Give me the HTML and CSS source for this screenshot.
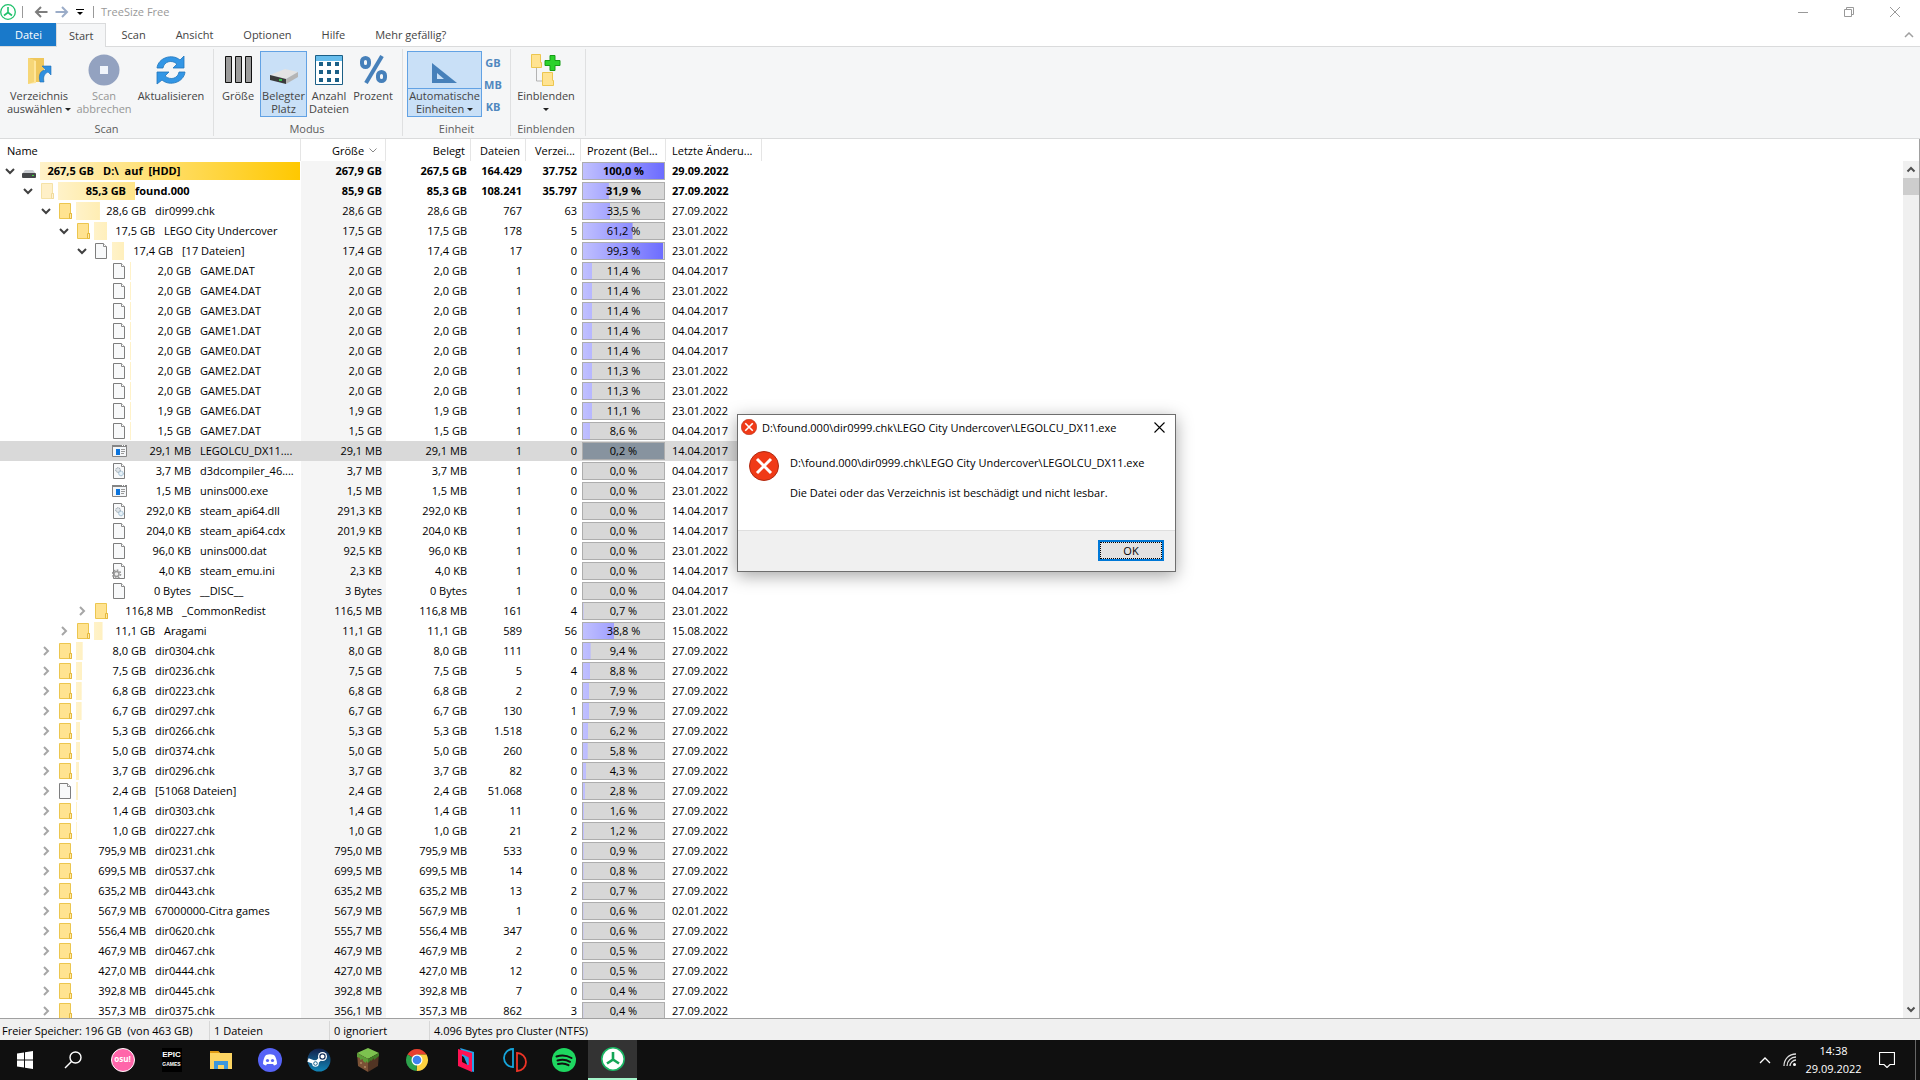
FILE: index.html
```html
<!DOCTYPE html>
<html lang="de">
<head>
<meta charset="UTF-8">
<title>TreeSize Free</title>
<link rel="stylesheet" href="styles.css">
</head>
<body>

<svg class="sprites" aria-hidden="true">
  <symbol id="open" viewBox="0 0 10 10"><path d="M1 3l4 4 4-4" fill="none" stroke="#404040" stroke-width="2"/></symbol>
  <symbol id="closed" viewBox="0 0 10 10"><path d="M3 1l4 4-4 4" fill="none" stroke="#a6a6a6" stroke-width="2"/></symbol>
  <symbol id="folder" viewBox="0 0 16 16">
    <path d="M1.500 .5h11v10h1v5h-12z" fill="#ffe391" stroke="#ecc64f"/>
    <path d="M11.500 15.500v-5h2v5z" fill="#ffe9a6" stroke="#e5b93c"/>
  </symbol>
  <symbol id="file" viewBox="0 0 16 16">
    <path d="M1.500 .5h8l3 3v12h-11z" fill="#f8f9fa" stroke="#7e7e7e"/>
    <path d="M9.500 .5v3h3" fill="#fff" stroke="#8e8e8e"/>
  </symbol>
  <symbol id="exe" viewBox="0 0 16 16">
    <path d="M.5 2.500h14v11H.5z" fill="#f4f6f8" stroke="#858585"/>
    <path d="M0 2h15v2H0z" fill="#858585"/>
    <path d="M10 2h1v1h-1zM12 2h1v1h-1z" fill="#fff"/>
    <path d="M4 6h4v6H4z" fill="#0b74dd"/>
    <path d="M9 6.500h4M9 8.500h4M9 10.500h3" stroke="#999"/>
  </symbol>
  <symbol id="dll" viewBox="0 0 16 16">
    <path d="M1.500 .5h8l3 3v12h-11z" fill="#f8f9fa" stroke="#7e7e7e"/>
    <path d="M9.500 .5v3h3" fill="#fff" stroke="#8e8e8e"/>
    <circle cx="6" cy="7" r="2.300" fill="#dfe5ea" stroke="#8b959e" stroke-dasharray="1.200 .6"/>
    <circle cx="9" cy="10.500" r="2.300" fill="#e6f1f8" stroke="#85aac4" stroke-dasharray="1.200 .6"/>
  </symbol>
  <symbol id="ini" viewBox="0 0 16 16">
    <path d="M1.500 .5h8l3 3v12h-11z" fill="#f8f9fa" stroke="#7e7e7e"/>
    <path d="M9.500 .5v3h3" fill="#fff" stroke="#8e8e8e"/>
    <circle cx="4.500" cy="11" r="4" fill="none" stroke="#999" stroke-width="1.600" stroke-dasharray="1.700 1.400"/>
    <circle cx="4.500" cy="11" r="2.500" fill="#eee" stroke="#999" stroke-width="1.400"/>
  </symbol>
  <symbol id="drive" viewBox="0 0 16 16">
    <path d="M3 7h8l3 4H0z" fill="#c9ccd1"/>
    <rect x="0" y="10" width="14" height="5" rx="1" fill="#45474a"/>
    <path d="M10 12h2v1h-2z" fill="#41d63c"/>
  </symbol>
  <symbol id="error" viewBox="0 0 30 30">
    <circle cx="15" cy="15" r="14.500" fill="#f03a17" stroke="#b02a12"/>
    <path d="M8 8l14 14M22 8L8 22" stroke="#fff" stroke-width="3"/>
  </symbol>
  <symbol id="up" viewBox="0 0 16 16"><path d="M4.500 10L8 6.500l3.500 3.500" fill="none" stroke="#505050" stroke-width="2"/></symbol>
  <symbol id="down" viewBox="0 0 16 16"><path d="M4.500 6L8 9.500 11.500 6" fill="none" stroke="#505050" stroke-width="2"/></symbol>
</svg>

<header class="titlebar">
  <svg class="logo" viewBox="0 0 16 16"><circle cx="8" cy="8" r="7.300" fill="#fff" stroke="#1fc16b" stroke-width="1.300"/><path d="M8 3v5.500l-4 3M8 8.500l4 3" fill="none" stroke="#1fc16b" stroke-width="1.600"/></svg>
  <span class="bar"></span>
  <button class="qa" aria-label="Zurück"><svg width="14" height="12" viewBox="0 0 14 12"><path d="M13.500 6H2M7 1L2 6l5 5" fill="none" stroke="#7d7d7d" stroke-width="2"/></svg></button>
  <button class="qa" aria-label="Vorwärts"><svg width="14" height="12" viewBox="0 0 14 12"><path d="M.5 6H12M7 1l5 5-5 5" fill="none" stroke="#9bacc8" stroke-width="2"/></svg></button>
  <button class="qa" aria-label="Anpassen"><svg width="8" height="8" viewBox="0 0 8 8"><path d="M0 1.500h8" stroke="#000"/><path d="M1 4h6L4 7z"/></svg></button>
  <span class="bar"></span>
  <span class="caption">TreeSize Free</span>
  <div class="window-buttons">
    <button aria-label="Minimieren"><svg width="10" height="10" viewBox="0 0 10 10"><path d="M0 5.500h10"/></svg></button>
    <button aria-label="Wiederherstellen"><svg width="10" height="10" viewBox="0 0 10 10"><path d="M.5 2.500h7v7h-7zM2.500 2V.5h7v7H8"/></svg></button>
    <button aria-label="Schließen"><svg width="10" height="10" viewBox="0 0 10 10"><path d="M0 0l10 10M10 0L0 10"/></svg></button>
  </div>
</header>

<nav class="tabs">
  <button class="tab file">Datei</button>
  <button class="tab active">Start</button>
  <button class="tab">Scan</button>
  <button class="tab">Ansicht</button>
  <button class="tab">Optionen</button>
  <button class="tab">Hilfe</button>
  <button class="tab">Mehr gefällig?</button>
  <button class="collapse" aria-label="Menüband reduzieren"><svg width="10" height="6" viewBox="0 0 10 6"><path d="M1 5l4-4 4 4" fill="none" stroke="#a0a0a0" stroke-width="1.500"/></svg></button>
</nav>

<section class="ribbon">
  <div class="group scan">
    <div class="tools">
      <button class="tool w70">
        <svg viewBox="0 0 32 32"><path d="M5 4h16v24H5z" fill="#efc75c"/><path d="M5 4l8 3v22l-8 1z" fill="#ffe69a"/><path d="M5 4l6 2v22l-6 2z" fill="#f6d677"/><path d="M17 28c-2-8 1-12 6-12l-4-4h9v9l-3-3c-4 2-5 5-4 10z" fill="#2f8fdf" stroke="#1d6fb8" stroke-width=".6"/></svg>
        <span>Verzeichnis<br>auswählen <i class="caret"></i></span>
      </button>
      <button class="tool w60" disabled>
        <svg viewBox="0 0 32 32"><circle cx="16" cy="16" r="15.500" fill="#93a2c0"/><path d="M12 12h8v8h-8z" fill="#f1f5fb"/></svg>
        <span>Scan<br>abbrechen</span>
      </button>
      <button class="tool w74">
        <svg viewBox="0 0 32 32"><path d="M2 14C3 4 17-1 25 6l4-4v12H18l4-4C16 5 9 8 8 14zM30 18c-1 10-15 15-23 8l-5 4V18h12l-4 4c6 5 13 2 14-4z" fill="#3396e5" stroke="#2176bd" stroke-width=".8"/></svg>
        <span>Aktualisieren</span>
      </button>
    </div>
    <div class="group-name">Scan</div>
  </div>
  <div class="group mode">
    <div class="tools">
      <button class="tool w44">
        <svg viewBox="0 0 32 32"><path d="M3.500 2.500h6v26h-6zM13.500 2.500h6v26h-6zM23.500 2.500h6v26h-6z" fill="#9b9b9b" stroke="#111"/></svg>
        <span>Größe</span>
      </button>
      <button class="tool w47 pressed">
        <svg viewBox="0 0 32 32"><path d="M2 21l15-6 13 3-12 7z" fill="#e3e3e3"/><path d="M2 21l16 4v5L2 26z" fill="#3b3b3b"/><path d="M18 25l12-7v5l-12 7z" fill="#b5b5b5"/><path d="M11 25h3v2h-3z" fill="#35c24a"/></svg>
        <span>Belegter<br>Platz</span>
      </button>
      <button class="tool w44">
        <svg viewBox="0 0 32 32"><path d="M2.500 1.500h27v29h-27z" fill="#fff" stroke="#1b5f86"/><path d="M3 2h26v5H3z" fill="#67bdec"/><path d="M6 8h4v4H6zM14 8h4v4h-4zM22 8h4v4h-4zM6 16h4v4H6zM14 16h4v4h-4zM22 16h4v4h-4zM6 24h4v4H6zM14 24h4v4h-4zM22 24h4v4h-4z" fill="#1b5f86"/></svg>
        <span>Anzahl<br>Dateien</span>
      </button>
      <button class="tool w44">
        <svg viewBox="0 0 32 32"><g fill="none" stroke="#4680ba"><rect x="5" y="4" width="7" height="9" rx="3.500" stroke-width="4"/><rect x="21" y="18" width="7" height="9" rx="3.500" stroke-width="4"/><path d="M25 2L9 29" stroke-width="4"/></g></svg>
        <span>Prozent</span>
      </button>
    </div>
    <div class="group-name">Modus</div>
  </div>
  <div class="group unit">
    <div class="tools">
      <button class="tool w75 pressed split">
        <svg viewBox="0 0 32 32"><path d="M3 9v20h25zM8 19l7 6H8z" fill="#4680ba" fill-rule="evenodd"/></svg>
        <span>Automatische<br>Einheiten <i class="caret"></i></span>
      </button>
      <div class="units">
        <button>GB</button>
        <button>MB</button>
        <button>KB</button>
      </div>
    </div>
    <div class="group-name">Einheit</div>
  </div>
  <div class="group show">
    <div class="tools">
      <button class="tool w70">
        <svg viewBox="0 0 32 32"><path d="M6.500 13v14H12" fill="none" stroke="#b3b3b3"/><g fill="#ffe391" stroke="#ecc64f"><path d="M1.500 .5h9v8h1v5h-10zM12.500 18.500h10v8h1v5h-11z"/></g><path d="M20 1.500h5v5h5v5h-5v5h-5v-5h-5v-5h5z" fill="#2bd22b" stroke="#179c17"/></svg>
        <span>Einblenden<br><i class="caret"></i></span>
      </button>
    </div>
    <div class="group-name">Einblenden</div>
  </div>
</section>

<main class="view">
  <div class="tree">
    <table>
      <colgroup><col class="c-name"><col class="c-size"><col class="c-size"><col class="c-count"><col class="c-count"><col class="c-pct"><col class="c-date"></colgroup>
      <thead>
        <tr>
          <th class="left">Name</th>
          <th>Größe <svg class="sort" viewBox="0 0 8 5"><path d="M.5 .5L4 4 7.500 .5" fill="none" stroke="#888"/></svg></th>
          <th>Belegt</th>
          <th>Dateien</th>
          <th>Verzei...</th>
          <th class="left">Prozent (Bel...</th>
          <th class="left">Letzte Änderu...</th>
        </tr>
      </thead>
      <tbody id="rows"></tbody>
    </table>
  </div>
  <div class="scrollbar">
    <svg><use href="#up"/></svg>
    <div class="thumb"></div>
    <svg class="end"><use href="#down"/></svg>
  </div>
</main>

<footer class="status">
  <span class="s1">Freier Speicher: 196 GB&nbsp; (von 463 GB)</span>
  <span class="s2">1 Dateien</span>
  <span class="s3">0 ignoriert</span>
  <span class="s4">4.096 Bytes pro Cluster (NTFS)</span>
</footer>

<div class="taskbar">
  <button class="app" aria-label="Start"><svg viewBox="0 0 24 24"><path d="M4 5.500l7-1v7H4zM12 4.300l8-1.300v8.500h-8zM4 12.500h7v7l-7-1zM12 12.500h8V21l-8-1.300z" fill="#fff"/></svg></button>
  <button class="app" aria-label="Suche"><svg viewBox="0 0 24 24"><circle cx="13.500" cy="9.500" r="5.500" fill="none" stroke="#fff" stroke-width="1.400"/><path d="M9.500 13.500L3 20" stroke="#fff" stroke-width="1.500"/></svg></button>
  <button class="app osu"><span>osu!</span></button>
  <button class="app epic"><span>EPIC<small>GAMES</small></span></button>
  <button class="app" aria-label="Explorer"><svg viewBox="0 0 24 24"><path d="M1 3h8l2 2h12v16H1z" fill="#fcd462"/><path d="M1 3h8l2 2H1z" fill="#e09b15"/><path d="M5 13h14v8h-4v-4H9v4H5z" fill="#3d97dc"/></svg></button>
  <button class="app" aria-label="Discord"><svg viewBox="0 0 24 24"><circle cx="12" cy="12" r="12" fill="#5663f7"/><path d="M8 7c3-1 5-1 8 0 2 2 3 6 3 9-1 1-2 1-3 1.500L15 16H9l-1 1.500C7 17 6 17 5 16c0-3 1-7 3-9z" fill="#fff"/><circle cx="9.500" cy="12.500" r="1.600" fill="#5663f7"/><circle cx="14.500" cy="12.500" r="1.600" fill="#5663f7"/></svg></button>
  <button class="app" aria-label="Steam"><svg viewBox="0 0 24 24"><defs><linearGradient id="st" x2="0" y2="1"><stop stop-color="#13204a"/><stop offset="1" stop-color="#1186b8"/></linearGradient></defs><circle cx="12" cy="12" r="11.500" fill="url(#st)"/><path d="M1 12l8 3 6-6" fill="none" stroke="#fff" stroke-width="3.500"/><circle cx="15.500" cy="8.500" r="4.500" fill="#fff"/><circle cx="15.500" cy="8.500" r="2.600" fill="#fff" stroke="#15305c" stroke-width="1.200"/><circle cx="8.500" cy="15.500" r="3.300" fill="#fff"/><circle cx="8.500" cy="15.500" r="1.800" fill="none" stroke="#15608c"/></svg></button>
  <button class="app" aria-label="Minecraft"><svg viewBox="0 0 24 24"><path d="M12 0l11 5-11 6L1 5z" fill="#7cc24f"/><path d="M1 5l11 6v13L2 18z" fill="#7b5236"/><path d="M23 5l-11 6v13l10-6z" fill="#513423"/><path d="M1 5l11 6v4l-2-2v2l-3-2v-2l-3 1v-2L1 9z" fill="#5b9e37"/><path d="M23 5l-11 6v4l3-3v1l3-3v2l5-4z" fill="#3f7c25"/><path d="M4 14h2v2H4zM8 18h2v2H8z" fill="#a27a57"/></svg></button>
  <button class="app" aria-label="Chrome"><svg viewBox="0 0 24 24"><path d="M12 12L2.500 6.500A11 11 0 0 1 21.500 6.500H12z" fill="#e8402f"/><path d="M12 12l9.500-5.500A11 11 0 0 1 11.500 23z" fill="#fdd13f"/><path d="M12 12l-.5 11A11 11 0 0 1 2.500 6.500z" fill="#2da24c"/><path d="M12 6.500h9.500L17 14z" fill="#fdd13f"/><circle cx="12" cy="12" r="5.500" fill="#fff"/><circle cx="12" cy="12" r="4.300" fill="#3f83ee"/></svg></button>
  <button class="app" aria-label="Parsec"><svg viewBox="0 0 24 24"><path d="M6 0l14 4v20l-4-1z" fill="#23a3e8"/><path d="M4 1l14 4v19L4 18zM8 7v7l6 3v-7z" fill="#ff1253" fill-rule="evenodd"/><path d="M8 7l6 3v7" fill="none" stroke="#23a3e8" stroke-width="1.500"/></svg></button>
  <button class="app" aria-label="Yuzu"><svg viewBox="0 0 24 24"><path d="M10 1v18A9 9 0 0 1 10 1z" fill="none" stroke="#16a6dc" stroke-width="1.800"/><path d="M14 5v18a9 9 0 0 0 0-18z" fill="none" stroke="#ee3426" stroke-width="1.800"/></svg></button>
  <button class="app" aria-label="Spotify"><svg viewBox="0 0 24 24"><circle cx="12" cy="12" r="12" fill="#1ed760"/><path d="M4.500 8.500c5-1.500 10.500-1 15 1.500M5.500 12.500c4-1.200 9-.8 12.500 1.300M6 16c3.500-1 7.500-.6 10.500 1.200" fill="none" stroke="#111" stroke-width="2" stroke-linecap="round"/></svg></button>
  <button class="app running" aria-label="TreeSize"><svg viewBox="0 0 24 24"><circle cx="12" cy="12" r="11.200" fill="#fff" stroke="#19b462" stroke-width="1.600"/><path d="M12 5v7.500l-6 4M12 12.500l6 4" fill="none" stroke="#14a557" stroke-width="2.600"/></svg></button>
  <div class="tray">
    <button aria-label="Ausgeblendete Symbole"><svg width="12" height="8" viewBox="0 0 12 8"><path d="M1 7l5-5 5 5" fill="none" stroke="#fff" stroke-width="1.300"/></svg></button>
    <button aria-label="Netzwerk"><svg width="14" height="14" viewBox="0 0 14 14"><g fill="none" stroke="#ddd" stroke-width="1.300"><path d="M1 13C1 6 6 1 13 1M4 13c0-5 4-9 9-9M7 13c0-3 3-6 6-6"/></g><circle cx="11.500" cy="11.500" r="1.500" fill="#fff"/></svg></button>
    <div class="clock">14:38<br>29.09.2022</div>
    <button class="note" aria-label="Benachrichtigungen"><svg width="16" height="16" viewBox="0 0 16 16"><path d="M.5 .5h15v12H11l-3 3-3-3H.5z" fill="none" stroke="#fff" stroke-width="1.200"/></svg></button>
    <span class="desktop"></span>
  </div>
</div>

<div class="dialog" role="alertdialog" aria-labelledby="dlg-title">
  <div class="dialog-title">
    <svg width="16" height="16"><use href="#error"/></svg>
    <span id="dlg-title">D:\found.000\dir0999.chk\LEGO City Undercover\LEGOLCU_DX11.exe</span>
    <button aria-label="Schließen"><svg width="11" height="11" viewBox="0 0 11 11"><path d="M.5 .5l10 10M10.500 .5l-10 10" stroke="#000" stroke-width="1.100"/></svg></button>
  </div>
  <div class="dialog-body">
    <svg width="30" height="30"><use href="#error"/></svg>
    <div>
      <p>D:\found.000\dir0999.chk\LEGO City Undercover\LEGOLCU_DX11.exe</p>
      <p>Die Datei oder das Verzeichnis ist beschädigt und nicht lesbar.</p>
    </div>
  </div>
  <div class="dialog-foot"><button class="ok">OK</button></div>
</div>

<script src="script.js"></script>
</body>
</html>
```
FILE: styles.css
```css
* {
  box-sizing: border-box;
}
body {
  margin: 0;
  height: 100vh;
  display: flex;
  flex-direction: column;
  overflow: hidden;
  background: #fff;
  color: #000;
  font-family: "Open Sans", "Noto Sans", sans-serif;
  font-size: 11px;
  line-height: 13px;
}
button {
  font: inherit;
  color: inherit;
  background: none;
  border: 0;
  padding: 0;
}
svg {
  display: block;
  flex: none;
}
.sprites {
  position: absolute;
  width: 0;
  height: 0;
}

/* title bar */
.titlebar {
  display: flex;
  align-items: center;
  height: 23px;
  flex: none;
}
.logo {
  width: 16px;
  height: 16px;
}
.bar {
  width: 1px;
  height: 12px;
  margin: 0 7px 0 6px;
  background: #999;
}
.qa {
  margin: 0 3px 0 4px;
}
.caption {
  color: #999;
}
.window-buttons {
  display: flex;
  margin-left: auto;
  padding-right: 2px;
}
.window-buttons button {
  width: 46px;
  height: 20px;
  display: flex;
  align-items: center;
  justify-content: center;
}
.window-buttons path {
  fill: none;
  stroke: #999;
}

/* tabs */
.tabs {
  display: flex;
  height: 24px;
  flex: none;
  border-bottom: 1px solid #dadbdc;
}
.tab {
  padding: 0 15px;
  color: #444;
}
.tab.file {
  width: 56px;
  background: #1979ca;
  color: #fff;
}
.tab.active {
  height: 24px;
  padding: 0 12px;
  border: 1px solid #dadbdc;
  border-bottom: 0;
  background: #f5f6f7;
}
.collapse {
  margin-left: auto;
  padding: 0 6px;
}

/* ribbon */
.ribbon {
  display: flex;
  height: 92px;
  flex: none;
  padding: 2px 0;
  background: #f5f6f7;
  border-bottom: 1px solid #dadbdc;
  color: #444;
}
.group {
  display: flex;
  flex-direction: column;
  justify-content: space-between;
  border-right: 1px solid #dfe0e1;
  padding: 2px 4px 0;
}
.group.scan { width: 214px; }
.group.mode { width: 189px; padding-left: 2px; }
.group.unit { width: 108px; }
.group.show { width: 75px; padding-left: 0; }
.tools {
  display: flex;
}
.tool {
  height: 66px;
  flex: none;
  display: flex;
  flex-direction: column;
  align-items: center;
  border: 1px solid transparent;
  white-space: nowrap;
}
.tool svg {
  width: 32px;
  height: 32px;
  margin: 2px 0 3px;
}
.tool:disabled {
  color: #969696;
}
.w44 { width: 44px; }
.w47 { width: 47px; }
.w60 { width: 60px; }
.w70 { width: 70px; }
.w74 { width: 74px; }
.w75 { width: 75px; }
.pressed {
  background: #c9e0f7;
  border-color: #62a2e4;
}
.split {
  background: linear-gradient(#62a2e4, #62a2e4) 0 36px / 100% 1px no-repeat #c9e0f7;
}
.caret {
  display: inline-block;
  vertical-align: 2px;
  border: 3px solid transparent;
  border-top-color: #222;
  border-bottom: 0;
}
.units {
  display: flex;
  flex-direction: column;
  width: 22px;
}
.units button {
  height: 22px;
  color: #5088bf;
  font-weight: 700;
}
.group-name {
  text-align: center;
  color: #5c5c5c;
  height: 14px;
}

/* tree view */
.view {
  display: flex;
  flex: 1;
  min-height: 0;
  border-right: 1px solid #a0a0a0;
}
.tree {
  flex: 1;
  overflow: hidden;
}
table {
  table-layout: fixed;
  width: 762px;
  border-collapse: separate;
  border-spacing: 0;
  white-space: nowrap;
}
.c-name { width: 301px; }
.c-size { width: 85px; }
.c-count { width: 55px; }
.c-pct { width: 85px; }
.c-date { width: 96px; }
th {
  height: 22px;
  padding: 0 5px 0 0;
  border-right: 1px solid #e5e5e5;
  font-weight: 400;
  text-align: right;
}
th.left {
  text-align: left;
  padding: 0 0 0 6px;
}
th:first-child {
  text-indent: 1px;
}
.sort {
  display: inline-block;
  width: 8px;
  height: 5px;
  margin: 0 3px 0 2px;
  vertical-align: 2px;
}
td {
  height: 20px;
  padding: 0 4px 2px 0;
  text-align: right;
}
td:first-child {
  padding: 0 1px 0 0;
}
td:nth-child(2) {
  background: #f5f5f5;
}
td:nth-child(6) {
  padding-bottom: 0;
}
td:last-child {
  text-align: left;
  padding-left: 6px;
}
.bold {
  font-weight: 700;
}
tr.selected td {
  background: #d9d9d9;
}
.node {
  display: flex;
  align-items: center;
  height: 20px;
}
.node .arrow {
  width: 10px;
  height: 10px;
  margin: 0 7px 0 5px;
}
.node .icon {
  width: 16px;
  height: 16px;
  margin-right: 2px;
}
.hidden .icon {
  opacity: 0.5;
}
.share {
  display: flex;
  align-items: center;
  flex: 1;
  height: 18px;
  padding-bottom: 1px;
  background: no-repeat;
}
.bytes {
  text-align: right;
  margin-right: 9px;
}
.l0 .bytes { width: 54px; }
.l1 .bytes { width: 68px; }
.l2 .bytes { width: 70px; }
.l3 .bytes, .l4 .bytes, .l5 .bytes { width: 61px; }
.l1 .node { padding-left: 18px; }
.l2 .node { padding-left: 36px; }
.l3 .node { padding-left: 54px; }
.l4 .node { padding-left: 72px; }
.l5 .node { padding-left: 90px; }
.pct {
  height: 18px;
  margin: 0 -3px 0 1px;
  border: 1px solid #adadad;
  background: no-repeat #d7d7d7;
  text-align: center;
  line-height: 16px;
}
.selected .pct {
  background: #87939f;
}

.scrollbar {
  display: flex;
  flex-direction: column;
  width: 16px;
  margin-top: 22px;
  background: #f0f0f0;
}
.scrollbar svg {
  width: 16px;
  height: 17px;
}
.thumb {
  height: 17px;
  background: #cdcdcd;
}
.scrollbar .end {
  margin-top: auto;
}

/* status bar */
.status {
  display: flex;
  height: 22px;
  flex: none;
  border-top: 1px solid #a0a0a0;
  background: #f0f0f0;
  padding: 2px 0 0 2px;
}
.status span {
  line-height: 19px;
  white-space: nowrap;
}
.status span + span {
  border-left: 1px solid #d7d7d7;
  padding-left: 4px;
}
.s1 { width: 207px; }
.s2 { width: 120px; }
.s3 { width: 100px; }

/* taskbar */
.taskbar {
  display: flex;
  height: 40px;
  flex: none;
  background: #101010;
  color: #fff;
}
.app {
  width: 49px;
  display: flex;
  align-items: center;
  justify-content: center;
}
.app svg {
  width: 24px;
  height: 24px;
}
.osu span {
  width: 24px;
  height: 24px;
  border: 1px solid #fff;
  border-radius: 50%;
  background: #ff66aa;
  font-size: 8px;
  font-weight: 700;
  line-height: 20px;
}
.epic span {
  width: 20px;
  height: 24px;
  background: #000;
  font-family: "Liberation Sans", sans-serif;
  font-size: 8px;
  font-weight: 700;
  line-height: 14px;
}
.epic small {
  display: block;
  font-size: 5px;
  line-height: 4px;
}
.running {
  background: #333;
  border-bottom: 2px solid #a5f5cb;
}
.tray {
  display: flex;
  align-items: center;
  margin-left: auto;
}
.tray button {
  width: 25px;
  display: flex;
  justify-content: center;
}
.clock {
  width: 63px;
  text-align: center;
  line-height: 18px;
}
.tray .note {
  width: 44px;
}
.desktop {
  width: 5px;
  height: 40px;
  margin-left: 6px;
  border-left: 1px solid #666;
}

/* error message */
.dialog {
  position: absolute;
  left: 737px;
  top: 414px;
  width: 439px;
  background: #fff;
  border: 1px solid #6e6e6e;
  box-shadow: 0 4px 16px rgba(0, 0, 0, 0.35);
}
.dialog-title {
  display: flex;
  align-items: center;
  height: 25px;
  padding: 0 10px 1px 3px;
  gap: 5px;
}
.dialog-title button {
  margin-left: auto;
}
.dialog-body {
  display: flex;
  gap: 11px;
  height: 90px;
  padding: 11px;
}
.dialog-body p {
  margin: 5px 0 17px;
}
.dialog-foot {
  display: flex;
  justify-content: flex-end;
  padding: 9px 11px 10px;
  background: #f0f0f0;
  border-top: 1px solid #dfdfdf;
}
.ok {
  width: 66px;
  height: 21px;
  background: #e1e1e1;
  border: 2px solid #0078d7;
  outline: 1px dotted #000;
  outline-offset: -3px;
}
```
FILE: script.js
```js
// level, icon, arrow, belegt, name, größe, dateien, verzeichnisse, prozent, datum
const rows = [
  [0, 'drive', 'open', '267,5 GB', 'D:\\  auf  [HDD]', '267,9 GB', '164.429', '37.752', '100,0', '29.09.2022'],
  [1, 'folder', 'open', '85,3 GB', 'found.000', '85,9 GB', '108.241', '35.797', '31,9', '27.09.2022'],
  [2, 'folder', 'open', '28,6 GB', 'dir0999.chk', '28,6 GB', '767', '63', '33,5', '27.09.2022'],
  [3, 'folder', 'open', '17,5 GB', 'LEGO City Undercover', '17,5 GB', '178', '5', '61,2', '23.01.2022'],
  [4, 'file', 'open', '17,4 GB', '[17 Dateien]', '17,4 GB', '17', '0', '99,3', '23.01.2022'],
  [5, 'file', '', '2,0 GB', 'GAME.DAT', '2,0 GB', '1', '0', '11,4', '04.04.2017'],
  [5, 'file', '', '2,0 GB', 'GAME4.DAT', '2,0 GB', '1', '0', '11,4', '23.01.2022'],
  [5, 'file', '', '2,0 GB', 'GAME3.DAT', '2,0 GB', '1', '0', '11,4', '04.04.2017'],
  [5, 'file', '', '2,0 GB', 'GAME1.DAT', '2,0 GB', '1', '0', '11,4', '04.04.2017'],
  [5, 'file', '', '2,0 GB', 'GAME0.DAT', '2,0 GB', '1', '0', '11,4', '04.04.2017'],
  [5, 'file', '', '2,0 GB', 'GAME2.DAT', '2,0 GB', '1', '0', '11,3', '23.01.2022'],
  [5, 'file', '', '2,0 GB', 'GAME5.DAT', '2,0 GB', '1', '0', '11,3', '23.01.2022'],
  [5, 'file', '', '1,9 GB', 'GAME6.DAT', '1,9 GB', '1', '0', '11,1', '23.01.2022'],
  [5, 'file', '', '1,5 GB', 'GAME7.DAT', '1,5 GB', '1', '0', '8,6', '04.04.2017'],
  [5, 'exe', '', '29,1 MB', 'LEGOLCU_DX11....', '29,1 MB', '1', '0', '0,2', '14.04.2017'],
  [5, 'dll', '', '3,7 MB', 'd3dcompiler_46....', '3,7 MB', '1', '0', '0,0', '04.04.2017'],
  [5, 'exe', '', '1,5 MB', 'unins000.exe', '1,5 MB', '1', '0', '0,0', '23.01.2022'],
  [5, 'dll', '', '292,0 KB', 'steam_api64.dll', '291,3 KB', '1', '0', '0,0', '14.04.2017'],
  [5, 'file', '', '204,0 KB', 'steam_api64.cdx', '201,9 KB', '1', '0', '0,0', '14.04.2017'],
  [5, 'file', '', '96,0 KB', 'unins000.dat', '92,5 KB', '1', '0', '0,0', '23.01.2022'],
  [5, 'ini', '', '4,0 KB', 'steam_emu.ini', '2,3 KB', '1', '0', '0,0', '14.04.2017'],
  [5, 'file', '', '0 Bytes', '__DISC__', '3 Bytes', '1', '0', '0,0', '04.04.2017'],
  [4, 'folder', 'closed', '116,8 MB', '_CommonRedist', '116,5 MB', '161', '4', '0,7', '23.01.2022'],
  [3, 'folder', 'closed', '11,1 GB', 'Aragami', '11,1 GB', '589', '56', '38,8', '15.08.2022'],
  [2, 'folder', 'closed', '8,0 GB', 'dir0304.chk', '8,0 GB', '111', '0', '9,4', '27.09.2022'],
  [2, 'folder', 'closed', '7,5 GB', 'dir0236.chk', '7,5 GB', '5', '4', '8,8', '27.09.2022'],
  [2, 'folder', 'closed', '6,8 GB', 'dir0223.chk', '6,8 GB', '2', '0', '7,9', '27.09.2022'],
  [2, 'folder', 'closed', '6,7 GB', 'dir0297.chk', '6,7 GB', '130', '1', '7,9', '27.09.2022'],
  [2, 'folder', 'closed', '5,3 GB', 'dir0266.chk', '5,3 GB', '1.518', '0', '6,2', '27.09.2022'],
  [2, 'folder', 'closed', '5,0 GB', 'dir0374.chk', '5,0 GB', '260', '0', '5,8', '27.09.2022'],
  [2, 'folder', 'closed', '3,7 GB', 'dir0296.chk', '3,7 GB', '82', '0', '4,3', '27.09.2022'],
  [2, 'file', 'closed', '2,4 GB', '[51068 Dateien]', '2,4 GB', '51.068', '0', '2,8', '27.09.2022'],
  [2, 'folder', 'closed', '1,4 GB', 'dir0303.chk', '1,4 GB', '11', '0', '1,6', '27.09.2022'],
  [2, 'folder', 'closed', '1,0 GB', 'dir0227.chk', '1,0 GB', '21', '2', '1,2', '27.09.2022'],
  [2, 'folder', 'closed', '795,9 MB', 'dir0231.chk', '795,0 MB', '533', '0', '0,9', '27.09.2022'],
  [2, 'folder', 'closed', '699,5 MB', 'dir0537.chk', '699,5 MB', '14', '0', '0,8', '27.09.2022'],
  [2, 'folder', 'closed', '635,2 MB', 'dir0443.chk', '635,2 MB', '13', '2', '0,7', '27.09.2022'],
  [2, 'folder', 'closed', '567,9 MB', '67000000-Citra games', '567,9 MB', '1', '0', '0,6', '02.01.2022'],
  [2, 'folder', 'closed', '556,4 MB', 'dir0620.chk', '555,7 MB', '347', '0', '0,6', '27.09.2022'],
  [2, 'folder', 'closed', '467,9 MB', 'dir0467.chk', '467,9 MB', '2', '0', '0,5', '27.09.2022'],
  [2, 'folder', 'closed', '427,0 MB', 'dir0444.chk', '427,0 MB', '12', '0', '0,5', '27.09.2022'],
  [2, 'folder', 'closed', '392,8 MB', 'dir0445.chk', '392,8 MB', '7', '0', '0,4', '27.09.2022'],
  [2, 'folder', 'closed', '357,3 MB', 'dir0375.chk', '356,1 MB', '862', '3', '0,4', '27.09.2022']
];

const TOTAL = 267.5;

function gb(text) {
  const value = parseFloat(text.replace(',', '.'));
  return text.endsWith('GB') ? value : 0;
}

document.getElementById('rows').innerHTML = rows.map(r => {
  const [level, icon, arrow, used, name, size, files, dirs, pct, date] = r;
  const share = gb(used) / TOTAL;
  const percent = parseFloat(pct.replace(',', '.'));
  let cls = 'l' + level;
  if (level < 2) cls += ' bold';
  if (name === 'found.000') cls += ' hidden';
  if (name.startsWith('LEGOLCU')) cls += ' selected';
  // the further a bar reaches, the stronger its end colour
  const shareBg = `background-image: linear-gradient(90deg, #fff2c9, rgb(255, ${242 - 42 * share}, ${201 - 201 * share})); background-size: ${share * 100}% 100%`;
  const pctBg = `background-image: linear-gradient(90deg, #c0c0ff, rgb(${192 - 0.84 * percent}, ${192 - 0.84 * percent}, 255)); background-size: ${percent}% 100%`;
  return `<tr class="${cls}">
    <td><div class="node">
      <svg class="arrow">${arrow ? `<use href="#${arrow}"/>` : ''}</svg>
      <svg class="icon"><use href="#${icon}"/></svg>
      <div class="share" style="${shareBg}"><span class="bytes">${used}</span><span>${name.replace(/ {2}/g, '&nbsp; ')}</span></div>
    </div></td>
    <td>${size}</td><td>${used}</td><td>${files}</td><td>${dirs}</td>
    <td><div class="pct" ${cls.includes('selected') ? '' : `style="${pctBg}"`}>${pct} %</div></td>
    <td>${date}</td>
  </tr>`;
}).join('');
```
